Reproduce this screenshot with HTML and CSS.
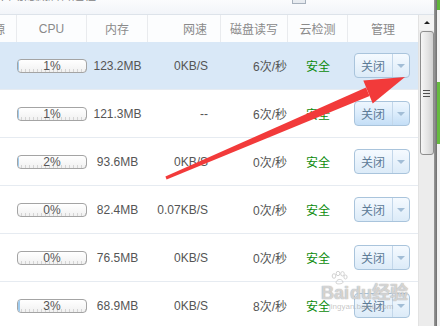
FILE: index.html
```html
<!DOCTYPE html>
<html>
<head>
<meta charset="utf-8">
<link rel="stylesheet" href="styles.css">
</head>
<body>
<div class="screen">
  <div class="main">
    <div class="topbar">
      <span class="top-left">自动隐藏后台进程</span>
      <span class="top-right"><span class="chk"></span><span class="top-text">显示所有进程的资源占用</span></span>
    </div>
    <div class="body">
      <div class="table">
        <div class="thead">
          <div class="th th-first"><span>来源</span></div>
          <div class="th">CPU</div>
          <div class="th">内存</div>
          <div class="th th-right">网速</div>
          <div class="th">磁盘读写</div>
          <div class="th">云检测</div>
          <div class="th th-last">管理</div>
        </div>

        <div class="tr sel">
          <div class="td"></div>
          <div class="td"><div class="bar"><div class="fill" style="width:1%"></div><span>1%</span></div></div>
          <div class="td td-center">123.2MB</div>
          <div class="td td-net">0KB/S</div>
          <div class="td td-disk">6次/秒</div>
          <div class="td td-center safe">安全</div>
          <div class="td td-center"><div class="btn"><span class="btn-label">关闭</span><span class="btn-drop"><span class="tri"></span></span></div></div>
        </div>

        <div class="tr">
          <div class="td"></div>
          <div class="td"><div class="bar"><div class="fill" style="width:1%"></div><span>1%</span></div></div>
          <div class="td td-center">121.3MB</div>
          <div class="td td-net">--</div>
          <div class="td td-disk">6次/秒</div>
          <div class="td td-center safe">安全</div>
          <div class="td td-center"><div class="btn btn-hover"><span class="btn-label">关闭</span><span class="btn-drop"><span class="tri"></span></span></div></div>
        </div>

        <div class="tr">
          <div class="td"></div>
          <div class="td"><div class="bar"><div class="fill" style="width:2%"></div><span>2%</span></div></div>
          <div class="td td-center">93.6MB</div>
          <div class="td td-net">0KB/S</div>
          <div class="td td-disk">0次/秒</div>
          <div class="td td-center safe">安全</div>
          <div class="td td-center"><div class="btn"><span class="btn-label">关闭</span><span class="btn-drop"><span class="tri"></span></span></div></div>
        </div>

        <div class="tr">
          <div class="td"></div>
          <div class="td"><div class="bar"><div class="fill" style="width:0%"></div><span>0%</span></div></div>
          <div class="td td-center">82.4MB</div>
          <div class="td td-net">0.07KB/S</div>
          <div class="td td-disk">0次/秒</div>
          <div class="td td-center safe">安全</div>
          <div class="td td-center"><div class="btn"><span class="btn-label">关闭</span><span class="btn-drop"><span class="tri"></span></span></div></div>
        </div>

        <div class="tr">
          <div class="td"></div>
          <div class="td"><div class="bar"><div class="fill" style="width:0%"></div><span>0%</span></div></div>
          <div class="td td-center">76.5MB</div>
          <div class="td td-net">0KB/S</div>
          <div class="td td-disk">0次/秒</div>
          <div class="td td-center safe">安全</div>
          <div class="td td-center"><div class="btn"><span class="btn-label">关闭</span><span class="btn-drop"><span class="tri"></span></span></div></div>
        </div>

        <div class="tr">
          <div class="td"></div>
          <div class="td"><div class="bar"><div class="fill" style="width:3%"></div><span>3%</span></div></div>
          <div class="td td-center">68.9MB</div>
          <div class="td td-net">0KB/S</div>
          <div class="td td-disk">8次/秒</div>
          <div class="td td-center safe">安全</div>
          <div class="td td-center"><div class="btn"><span class="btn-label">关闭</span><span class="btn-drop"><span class="tri"></span></span></div></div>
        </div>
      </div>

      <div class="scrollbar">
        <div class="sb-up"><span class="sb-tri"></span></div>
        <div class="sb-thumb">
          <div class="grip"><i></i><i></i><i></i></div>
        </div>
      </div>
    </div>
  </div>
  <div class="edge">
    <div class="edge-line"></div>
    <div class="edge-win">
      <div class="g1"></div>
      <div class="w1"></div>
      <div class="g2"></div>
      <div class="w2"></div>
    </div>
  </div>

  <svg class="arrow" width="440" height="326" viewBox="0 0 440 326">
    <polygon points="165.4,176.6 366,87.4 369.6,96.1 166.6,179.4" fill="#f23a3a"/>
    <polygon points="405,77 363.3,80.6 372.7,103.4" fill="#f23a3a"/>
  </svg>

  <div class="watermark">
    <div class="paw">
      <svg width="18" height="14" viewBox="0 0 18 14">
        <ellipse cx="4" cy="5" rx="1.8" ry="2.3" fill="none" stroke="#c8c8c8" stroke-width="1"/>
        <ellipse cx="8" cy="2.5" rx="1.8" ry="2.2" fill="none" stroke="#c8c8c8" stroke-width="1"/>
        <ellipse cx="12.5" cy="2.8" rx="1.8" ry="2.2" fill="none" stroke="#c8c8c8" stroke-width="1"/>
        <ellipse cx="15.5" cy="6" rx="1.6" ry="2" fill="none" stroke="#c8c8c8" stroke-width="1"/>
        <path d="M6 12 C6 8 12 7 13 11 C13.5 13 6.5 13.5 6 12 Z" fill="none" stroke="#c8c8c8" stroke-width="1"/>
      </svg>
    </div>
    <div class="wm-main">Bai<span class="wm-du">du</span>经验</div>
    <div class="wm-url">jingyan.baidu.com</div>
  </div>
</div>
</body>
</html>
```

FILE: styles.css
```css
* { box-sizing: border-box; }

body {
  margin: 0;
  background: #ffffff;
}

.screen {
  position: relative;
  width: 440px;
  height: 326px;
  overflow: hidden;
  display: flex;
  font-family: "Liberation Sans", "Noto Sans CJK SC", sans-serif;
  font-size: 12px;
  color: #555555;
  background: #ffffff;
}

.main {
  width: 434px;
  display: flex;
  flex-direction: column;
}

/* top strip (mostly cut off) */
.topbar {
  height: 15px;
  flex: none;
  background: linear-gradient(#fbfcfd, #f2f5f9);
  border-bottom: 1px solid #dde3ea;
  position: relative;
  overflow: hidden;
  display: flex;
  align-items: flex-start;
}

.top-left {
  margin-top: -11px;
  line-height: 14px;
  color: #7d7d7d;
  white-space: nowrap;
}

.top-right {
  margin-left: 196px;
  margin-top: -10px;
  display: flex;
  align-items: flex-start;
  white-space: nowrap;
}

.chk {
  width: 14px;
  height: 14px;
  border: 1px solid #a7b1bd;
  background: linear-gradient(#f4f6f8, #e6eaef);
}

.top-text {
  margin-left: 3px;
  line-height: 12px;
  margin-top: -2px;
  color: #444444;
}

.body {
  flex: 1;
  display: flex;
  min-height: 0;
}

/* table */
.table {
  width: 418px;
  display: flex;
  flex-direction: column;
}

.thead,
.tr {
  display: grid;
  grid-template-columns: 17px 70px 61px 73px 67px 60px 70px;
  flex: none;
}

.thead {
  height: 27px;
  background: #fcfdfe;
}

.th {
  display: flex;
  align-items: center;
  justify-content: center;
  border-right: 1px solid #e9ebee;
  color: #8a8a8a;
  white-space: nowrap;
  overflow: hidden;
}

.th-first {
  justify-content: flex-end;
  padding-right: 11px;
}

.th-right {
  justify-content: flex-end;
  padding-right: 13px;
}

.th-last {
  border-right: none;
}

.tr {
  height: 48px;
  border-bottom: 1px solid #e6ebf1;
}

.tr.sel {
  background: #d9e8f7;
}

.td {
  display: flex;
  align-items: center;
  white-space: nowrap;
}

.td-center {
  justify-content: center;
}

.td-net {
  justify-content: flex-end;
  padding-right: 13px;
}

.td-disk {
  justify-content: flex-end;
  padding-right: 1px;
}

.safe {
  color: #0a8a0a;
}

/* cpu bar */
.bar {
  position: relative;
  width: 70px;
  height: 14px;
  border: 1px solid #a4a4a4;
  border-radius: 4px;
  background:
    repeating-linear-gradient(to right, transparent 0 3px, #d4d4d4 3px 4px) left bottom / 100% 3px no-repeat,
    linear-gradient(#ffffff, #f1f1f1);
  display: flex;
  align-items: center;
  justify-content: center;
  overflow: hidden;
}

.fill {
  position: absolute;
  left: 0;
  top: 0;
  bottom: 0;
  background: #9fcbee;
}

.bar span {
  position: relative;
  line-height: 12px;
  color: #555555;
}

/* button */
.btn {
  width: 56px;
  height: 25px;
  margin-left: -3px;
  border: 1px solid #a9c4dc;
  border-radius: 4px;
  background: linear-gradient(#f5faff, #dcebf8);
  display: flex;
}

.btn-hover {
  background: linear-gradient(#eef6fe 0%, #d9ebfb 55%, #c4def6 100%);
}

.btn-label {
  width: 38px;
  display: flex;
  align-items: center;
  justify-content: center;
  color: #5d7b97;
  border-right: 1px solid #c3d7ea;
}

.btn-drop {
  flex: 1;
  display: flex;
  align-items: center;
  justify-content: center;
}

.tri {
  width: 0;
  height: 0;
  border-left: 4px solid transparent;
  border-right: 4px solid transparent;
  border-top: 4px solid #a2bdd6;
}

/* scrollbar */
.scrollbar {
  width: 16px;
  background: #ececec;
  border-left: 1px solid #e2e2e2;
  display: flex;
  flex-direction: column;
  align-items: center;
}

.sb-up {
  height: 15px;
  width: 15px;
  display: flex;
  align-items: center;
  justify-content: center;
  background: #f4f4f4;
}

.sb-tri {
  width: 0;
  height: 0;
  border-left: 3px solid transparent;
  border-right: 3px solid transparent;
  border-bottom: 3px solid #202020;
}

.sb-thumb {
  margin-top: 1px;
  width: 14px;
  height: 124px;
  border: 1px solid #8e8e8e;
  border-radius: 3px;
  background: linear-gradient(to right, #f6f6f6, #e2e2e2 60%, #cfcfcf);
  display: flex;
  align-items: center;
  justify-content: center;
}

.grip {
  display: flex;
  flex-direction: column;
  gap: 2px;
}

.grip i {
  display: block;
  width: 7px;
  height: 1px;
  background: #4f4f4f;
}

/* right edge (window behind) */
.edge {
  width: 6px;
  display: flex;
}

.edge-line {
  width: 3px;
  background: linear-gradient(to right, #9a9a9a, #6e6e6e);
}

.edge-win {
  flex: 1;
  display: flex;
  flex-direction: column;
}

.g1 { height: 10px; background: #5fb63a; }
.w1 { height: 72px; background: #f4f4f4; }
.g2 { height: 62px; background: #66bb40; }
.w2 { flex: 1; background: #f2f2f2; }

/* overlays */
.arrow {
  position: absolute;
  left: 0;
  top: 0;
  pointer-events: none;
}

.watermark {
  position: absolute;
  left: 321px;
  top: 271px;
  pointer-events: none;
  display: flex;
  flex-direction: column;
  align-items: flex-start;
}

.paw {
  margin-left: 9px;
  height: 13px;
  opacity: 0.8;
}

.wm-main {
  font-family: "Liberation Sans", "Noto Sans CJK SC", sans-serif;
  font-size: 18px;
  font-weight: bold;
  line-height: 18px;
  color: rgba(255, 255, 255, 0.55);
  text-shadow: 0 0 1px rgba(150, 150, 150, 0.7), 0 0 1px rgba(150, 150, 150, 0.7);
  white-space: nowrap;
}

.wm-du {
  margin-left: 1px;
}

.wm-url {
  margin-left: 8px;
  font-size: 8px;
  line-height: 9px;
  color: rgba(160, 160, 160, 0.6);
  white-space: nowrap;
}
```
